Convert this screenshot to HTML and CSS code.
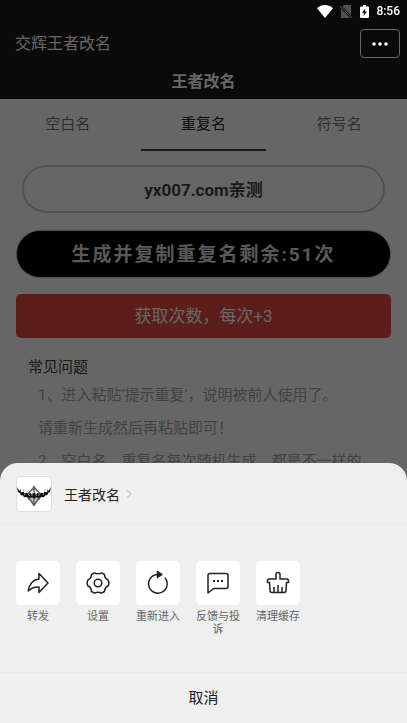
FILE: index.html
```html
<!DOCTYPE html>
<html lang="zh-CN">
<head>
    <meta charset="UTF-8">
    <meta name="viewport" content="width=device-width, initial-scale=1.0">
    <title>王者改名</title>
    <link rel="stylesheet" href="styles.css">
</head>
<body>

<div class="page">
    <header class="header">
        <div class="app-name">交辉王者改名</div>
        <h1>王者改名</h1>
    </header>

    <nav class="tabs">
        <button type="button" class="tab">空白名</button>
        <button type="button" class="tab active">重复名</button>
        <button type="button" class="tab">符号名</button>
    </nav>

    <main class="content">
        <input type="text" class="name-input" aria-label="名字" value="yx007.com亲测">
        <button type="button" class="generate">生成并复制重复名剩余:51次</button>
        <button type="button" class="get-more">获取次数，每次+3</button>

        <section class="faq">
            <h2>常见问题</h2>
            <p>1、进入粘贴‘提示重复’，说明被前人使用了。</p>
            <p>请重新生成然后再粘贴即可！</p>
            <p>2、空白名、重复名每次随机生成，都是不一样的</p>
        </section>
    </main>
</div>

<div class="mask"></div>

<div class="top-layer">
    <div class="status-bar">
        <svg class="wifi" width="16" height="13" viewBox="0 0 16 13"><path d="M0 3.200C4.500-1 11.500-1 16 3.200L8 13z" fill="#fff"/></svg>
        <svg class="sim" width="13" height="13" viewBox="0 0 13 13"><path d="M4 0h7v13H1V4z" fill="#505050"/><path d="M.5 1.500l11 11" stroke="#0b0b0b" stroke-width="2.500"/><path d="M0 .8l12 12" stroke="#606060"/></svg>
        <svg class="battery" width="9" height="13" viewBox="0 0 9 13"><path d="M3 0h3v1.500h2q1 0 1 1V12q0 1-1 1H1q-1 0-1-1V2.500q0-1 1-1h2z" fill="#fff"/><path d="M5.300 3.500L2 7.800h2l-.5 3.200L7 6.600H5z" fill="#0b0b0b"/></svg>
        <span>8:56</span>
    </div>
    <button type="button" class="more" aria-label="更多">
        <svg width="18" height="6" viewBox="0 0 18 6" fill="#fff"><circle cx="3" cy="3" r="1.800"/><circle cx="9" cy="3" r="1.800"/><circle cx="15" cy="3" r="1.800"/></svg>
    </button>
</div>

<div class="sheet" role="dialog" aria-label="菜单">
    <a href="#" class="sheet-head">
        <span class="logo">
            <svg width="34" height="34" viewBox="0 0 34 34" fill="none">
                <path d="M17 10l7.500 8.500L17 28l-7.500-9.500z" stroke="#555" stroke-width="1.300"/>
                <circle cx="17" cy="18.500" r="6" stroke="#666"/>
                <path d="M17 9v20M11 22h12" stroke="#555" stroke-width="1.200"/>
                <path d="M0 10l2.500 4 1-2 .5 3.500 2.500-1 1 2 2.500-1 1 1.500 2.500-1 1 1 2.500-1 2.500 1 1-1 2.500 1 1-1.500 2.500 1 1-2 2.500 1 .5-3.500 1 2L34 10l-1 5-2 1-.5 2-2.500.5-1 1.800-3-.3-2 1-3-.5-2 .8-2-.8-3 .5-2-1-3 .3-1-1.800-2.500-.5L3 16l-2-1z" fill="#111"/>
                <path d="M11 17.500l2 1m2-1.500v2m4-2v2m2-.5l2-1M7 17l1 1m18 0l1-1" stroke="#aaa" stroke-width=".8"/>
                <path d="M6 12l.5 2m21.500-2l-.5 2" stroke="#aaa"/>
                <circle cx="17" cy="10" r="1.200" fill="#3b7f9b"/>
                <path d="M14.500 26h5L17 29z" fill="#555"/>
            </svg>
        </span>
        <span>王者改名</span>
        <svg width="6" height="10" viewBox="0 0 6 10" fill="none" stroke="#c4c4c4" stroke-width="1.200"><path d="M1 1l4 4-4 4"/></svg>
    </a>

    <div class="actions">
        <button type="button" class="action">
            <span class="tile">
                <svg viewBox="0 0 24 24"><path d="M13 2.500l9 9.500-9 9.500v-5.500C8.500 15.800 5 17 2.200 20 3 13.500 7 8.500 13 8z"/></svg>
            </span>
            <span>转发</span>
        </button>
        <button type="button" class="action">
            <span class="tile">
                <svg viewBox="0 0 24 24"><path d="M8.500 1.800Q12 3.800 15.500 1.800L18.500 3.500Q18.500 7.300 22 9Q23.800 12 22 15Q18.500 16.700 18.500 20.500L15.500 22.200Q12 20.200 8.500 22.200L5.500 20.500Q5.500 16.700 2 15Q.2 12 2 9Q5.500 7.300 5.500 3.500Z"/><circle cx="12" cy="12" r="3.800"/></svg>
            </span>
            <span>设置</span>
        </button>
        <button type="button" class="action">
            <span class="tile">
                <svg viewBox="0 0 24 24"><path d="M12 3.500A9.300 9.300 0 1 0 19 6.800"/><path d="M11.500.5l4.500 3-4.500 3z" fill="#222"/></svg>
            </span>
            <span>重新进入</span>
        </button>
        <button type="button" class="action">
            <span class="tile">
                <svg viewBox="0 0 24 24"><path d="M2 22V4.500Q2 2.500 4 2.500h16q2 0 2 2v11q0 2-2 2H7.500z"/><path d="M7 10h2m2 0h2m2 0h2" stroke-width="2.200"/></svg>
            </span>
            <span>反馈与投诉</span>
        </button>
        <button type="button" class="action">
            <span class="tile">
                <svg viewBox="0 0 24 24"><path d="M10 8V3.500Q10 1.500 12 1.500t2 2V8h6.500q2 0 2 2v1.500H20.500L20 19.500q0 2-2 2H6q-2 0-2-2L3.500 11.500H1.500V10q0-2 2-2z"/><path d="M8 21v-5m4 5v-7m4 7v-5"/></svg>
            </span>
            <span>清理缓存</span>
        </button>
    </div>

    <button type="button" class="cancel">取消</button>
</div>

</body>
</html>
```

FILE: styles.css
```css
* {
    box-sizing: border-box;
}

body {
    margin: 0;
    height: 100vh;
    overflow: hidden;
    background-color: #fff;
    font-family: Roboto, "Noto Sans CJK SC", sans-serif;
    color: #333;
}

button, input {
    font-family: inherit;
    border: none;
    padding: 0;
}

button {
    cursor: pointer;
    background: none;
    color: inherit;
}

h1, h2, p {
    margin: 0;
}

/* Сторінка під меню */
.header {
    padding-top: 24px;
    background-color: #1b1b1b;
    color: #fff;
}

.app-name {
    padding-left: 15px;
    font-size: 16px;
    line-height: 40px;
}

h1 {
    font-size: 16px;
    line-height: 35px;
    text-align: center;
}

.tabs {
    display: grid;
    grid-template-columns: 1fr 1fr 1fr;
}

.tab {
    height: 52px;
    margin: 0 5px;
    padding-bottom: 4px;
    border-bottom: 2px solid transparent;
    font-size: 15px;
    color: #777;
}

.tab.active {
    border-color: #444;
    color: #222;
}

.content {
    padding: 14px 16px;
}

.name-input {
    display: block;
    width: calc(100% - 12px);
    height: 48px;
    margin: 0 auto 17px;
    padding-bottom: 2px;
    border: 2px solid #ccc;
    border-radius: 24px;
    background-color: #fff;
    font-size: 17px;
    font-weight: bold;
    color: #444;
    text-align: center;
}

.generate {
    display: block;
    width: 100%;
    height: 48px;
    margin-bottom: 16px;
    padding-bottom: 4px;
    border: 1px solid #bbb;
    border-radius: 24px;
    background-color: #000;
    font-size: 19px;
    font-weight: bold;
    letter-spacing: 2px;
    color: #ddd;
}

.get-more {
    display: block;
    width: 100%;
    height: 44px;
    padding-bottom: 4px;
    border-radius: 5px;
    background-color: #e64d42;
    font-size: 17px;
    color: #fff;
}

.faq {
    padding: 17px 12px;
}

.faq h2 {
    font-size: 15px;
    font-weight: normal;
    line-height: 24px;
    color: #444;
}

.faq p {
    padding-left: 10px;
    font-size: 15px;
    line-height: 33px;
    color: #a6a6a6;
}

.mask {
    position: fixed;
    inset: 0;
    background-color: rgba(0, 0, 0, 0.6);
}

/* Статус і кнопка "ще" */
.top-layer {
    position: fixed;
    top: 0;
    right: 0;
    padding: 0 7px;
    display: flex;
    flex-direction: column;
    align-items: flex-end;
    gap: 7px;
}

.status-bar {
    display: flex;
    align-items: center;
    height: 22px;
    font-size: 12px;
    font-weight: 500;
    color: #fff;
}

.wifi, .sim, .battery {
    margin-right: 7px;
}

.more {
    display: flex;
    align-items: center;
    justify-content: center;
    width: 40px;
    height: 29px;
    border: 1px solid #666;
    border-radius: 4px;
}

/* Нижнє меню */
.sheet {
    position: fixed;
    left: 0;
    right: 0;
    bottom: 0;
    border-radius: 18px 18px 0 0;
    background-color: #efefef;
    color: #222;
}

.sheet-head {
    display: flex;
    align-items: center;
    padding: 13px 16px 12px;
    border-bottom: 1px solid #e9e9e9;
    font-size: 14px;
    color: inherit;
    text-decoration: none;
}

.sheet-head > svg {
    margin-left: 6px;
}

.logo {
    display: flex;
    margin-right: 12px;
    border: 1px solid #ddd;
    border-radius: 4px;
    background-color: #fff;
}

.actions {
    display: flex;
    align-items: flex-start;
    gap: 16px;
    padding: 36px 16px;
}

.action {
    width: 44px;
    font-size: 11px;
    line-height: 13px;
    color: #666;
}

.tile {
    display: flex;
    align-items: center;
    justify-content: center;
    height: 44px;
    margin-bottom: 5px;
    border-radius: 5px;
    background-color: #fff;
}

.tile svg {
    width: 24px;
    height: 24px;
    fill: none;
    stroke: #222;
    stroke-width: 1.5px;
    stroke-linejoin: round;
}

.cancel {
    display: block;
    width: 100%;
    height: 51px;
    padding-bottom: 4px;
    border-top: 1px solid #e9e9e9;
    font-size: 15px;
}
```
